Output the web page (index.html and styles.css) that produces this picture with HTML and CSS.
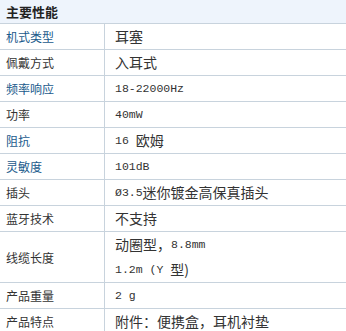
FILE: index.html
```html
<!DOCTYPE html>
<html lang="zh-CN">
<head>
<meta charset="utf-8">
<title>主要性能</title>
<link rel="stylesheet" href="styles.css">
</head>
<body>
<div class="spec">
  <div class="head">主要性能</div>
  <div class="grid">
    <div class="k link">机式类型</div><div class="v">耳塞</div>
    <div class="k">佩戴方式</div><div class="v">入耳式</div>
    <div class="k link">频率响应</div><div class="v"><span class="en">18-22000Hz</span></div>
    <div class="k">功率</div><div class="v"><span class="en">40mW</span></div>
    <div class="k link">阻抗</div><div class="v"><span class="en">16 </span>欧姆</div>
    <div class="k link">灵敏度</div><div class="v"><span class="en">101dB</span></div>
    <div class="k">插头</div><div class="v"><span class="en">Ø3.5</span>迷你镀金高保真插头</div>
    <div class="k">蓝牙技术</div><div class="v">不支持</div>
    <div class="k">线缆长度</div><div class="v"><div class="ln">动圈型，<span class="en">8.8mm</span></div><div class="ln"><span class="en">1.2m (Y </span>型)</div></div>
    <div class="k">产品重量</div><div class="v"><span class="en">2 g</span></div>
    <div class="k">产品特点</div><div class="v">附件：便携盒，耳机衬垫</div>
  </div>
</div>
</body>
</html>
```

FILE: styles.css
```css
html, body {
  margin: 0;
  padding: 0;
  background: #ffffff;
}
.spec {
  width: 346px;
  font-family: "Noto Sans CJK SC", "Noto Sans", sans-serif;
  color: #333333;
}
.head {
  height: 23px;
  line-height: 23px;
  padding-left: 6px;
  background: #eef4fc;
  border-bottom: 1px solid #c8d3dd;
  font-size: 13px;
  font-weight: bold;
  color: #222222;
}
.grid {
  display: grid;
  grid-template-columns: 105px 1fr;
}
.k {
  box-sizing: border-box;
  border-right: 1px solid #c8d3dd;
  border-bottom: 1px solid #c8d3dd;
  padding-left: 6px;
  font-size: 12px;
  display: flex;
  align-items: center;
  min-height: 26px;
}
.k.link {
  color: #1a5a8c;
}
.v {
  border-bottom: 1px solid #c8d3dd;
  padding-left: 10px;
  font-size: 14px;
  line-height: 25px;
  min-height: 25px;
}
.ln {
  height: 25px;
  overflow: hidden;
}
.en {
  font-family: "Liberation Mono", monospace;
  font-size: 11.5px;
  line-height: 25px;
  vertical-align: top;
}
```
